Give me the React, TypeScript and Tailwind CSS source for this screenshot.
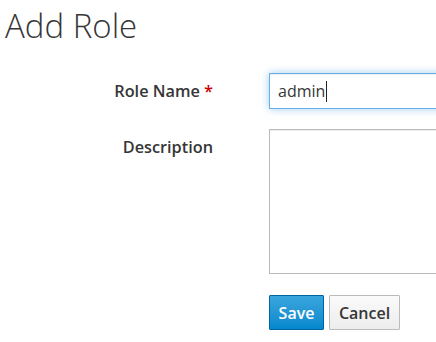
export default function App() {
  return (
    <div className="w-[436px] h-[342px] overflow-hidden bg-white font-['Open_Sans',sans-serif] text-[#363636]">
      <h1 className="pl-[5px] pt-[4px] text-[33px] font-light leading-[44px] text-[#363636]">Add Role</h1>

      <form className="mt-[25px] grid grid-cols-[213px_1fr] gap-x-[56px] gap-y-[20px]">
        <label className="h-[36px] text-right text-[16.3px] font-semibold leading-[36px]">
          Role Name <span className="text-[#cc0000]">*</span>
        </label>
        <div className="w-[300px] h-[36px] flex items-center border border-[#66afe9] pl-[8px] text-[16px] shadow-[inset_0_1px_1px_rgba(0,0,0,0.075),0_0_8px_rgba(102,175,233,0.6)]">
          <span>admin</span>
          <span className="ml-[1px] w-px h-[21px] bg-[#222]" />
        </div>

        <label className="h-[36px] text-right text-[16.3px] font-semibold leading-[36px]">Description</label>
        <div className="w-[300px] h-[145px] border border-[#bbbbbb] shadow-[inset_0_1px_1px_rgba(0,0,0,0.075)]" />

        <div />
        <div className="mt-[1px] flex gap-[5px]">
          <button
            type="button"
            className="h-[35px] w-[55px] rounded-[1px] border border-[#00659c] bg-gradient-to-b from-[#39a5dc] to-[#0088ce] text-[16px] font-semibold text-white"
          >
            Save
          </button>
          <button
            type="button"
            className="h-[35px] w-[71px] rounded-[1px] border border-[#bbbbbb] bg-gradient-to-b from-[#fafafa] to-[#ededed] text-[16px] font-semibold text-[#363636]"
          >
            Cancel
          </button>
        </div>
      </form>
    </div>
  );
}
